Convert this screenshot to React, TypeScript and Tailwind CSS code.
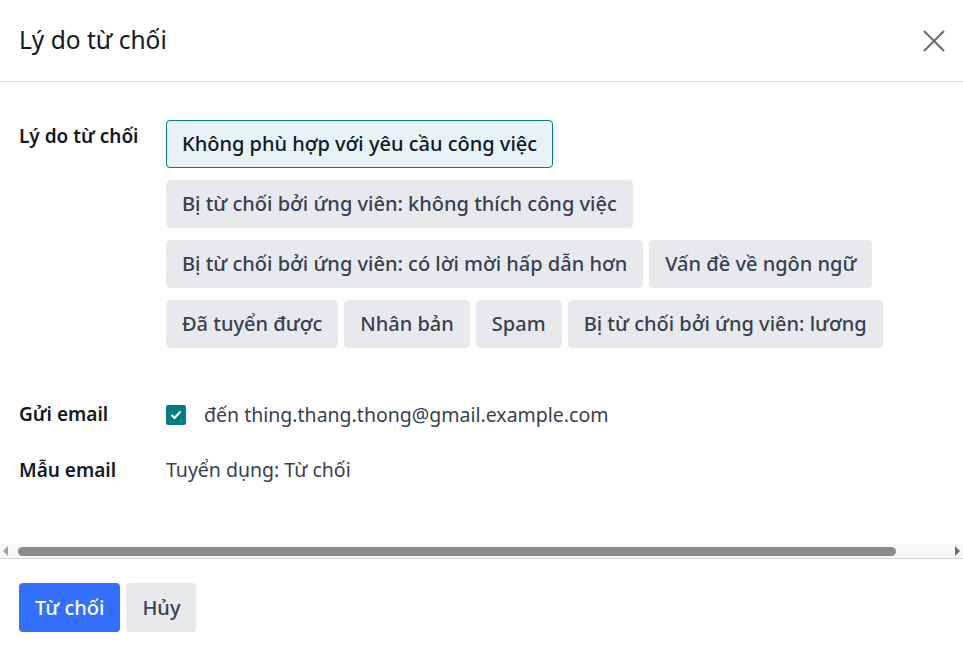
import React from 'react';

const reasons = [
  'Không phù hợp với yêu cầu công việc',
  'Bị từ chối bởi ứng viên: không thích công việc',
  'Bị từ chối bởi ứng viên: có lời mời hấp dẫn hơn',
  'Vấn đề về ngôn ngữ',
  'Đã tuyển được',
  'Nhân bản',
  'Spam',
  'Bị từ chối bởi ứng viên: lương',
];

function ReasonPill({ label, active }: { label: string; active?: boolean }) {
  return (
    <button
      className={`h-[48px] px-[15px] rounded-[4px] border text-[20px] font-medium leading-none whitespace-nowrap
        ${active ? 'bg-[#e6f2f3] border-[#017e84] text-[#111827]' : 'bg-[#e7e9ed] border-[#e7e9ed] text-[#374151]'}`}
    >
      {label}
    </button>
  );
}

export default function App() {
  return (
    <div
      className="w-[963px] h-[656px] bg-white flex flex-col overflow-hidden text-[#111827]"
      style={{ fontFamily: '"Noto Sans", "Open Sans", sans-serif' }}
    >
      <header className="h-[82px] flex items-center justify-between pl-[19px] pr-[16px] border-b border-[#d8dadd] shrink-0">
        <h1 className="text-[24.5px] font-normal">Lý do từ chối</h1>
        <button className="text-[#6b6b6b]">
          <svg width="26" height="26" viewBox="0 0 26 26" fill="none" stroke="currentColor" strokeWidth="2">
            <path d="M3 3L23 23M23 3L3 23" />
          </svg>
        </button>
      </header>

      <main className="flex-1 flex flex-col pt-[38px]">
        <div className="flex px-[19px]">
          <div className="w-[147px] shrink-0 text-[19px] font-semibold pt-[2px]">Lý do từ chối</div>
          <div className="flex flex-wrap gap-x-[6px] gap-y-[12px] w-[740px]">
            {reasons.map((r, i) => (
              <ReasonPill key={r} label={r} active={i === 0} />
            ))}
          </div>
        </div>

        <div className="flex items-center px-[19px] mt-[52px]">
          <div className="w-[147px] shrink-0 text-[19px] font-semibold">Gửi email</div>
          <span className="w-[20px] h-[20px] rounded-[2px] bg-[#017e84] flex items-center justify-center">
            <svg width="12" height="10" viewBox="0 0 12 10" fill="none" stroke="white" strokeWidth="2.2">
              <path d="M1.5 5L4.5 8L10.5 1.5" />
            </svg>
          </span>
          <span className="ml-[18px] text-[19.5px] text-[#374151]">đến thing.thang.thong@gmail.example.com</span>
        </div>

        <div className="flex items-center px-[19px] mt-[26px]">
          <div className="w-[147px] shrink-0 text-[19px] font-semibold">Mẫu email</div>
          <span className="text-[19.5px] text-[#374151]">Tuyển dụng: Từ chối</span>
        </div>

        <div className="mt-auto h-[14px] bg-[#f8f8f8] flex items-center">
          <span className="w-0 h-0 ml-[3px] border-y-[5px] border-y-transparent border-r-[5px] border-r-[#a3a3a3]" />
          <div className="ml-[10px] w-[878px] h-[9px] rounded-full bg-[#8b8b8b]" />
          <span className="ml-auto mr-[3px] w-0 h-0 border-y-[5px] border-y-transparent border-l-[5px] border-l-[#6b6b6b]" />
        </div>
      </main>

      <footer className="h-[98px] shrink-0 border-t border-[#d8dadd] flex items-start gap-[6px] pl-[19px] pt-[24px]">
        <button className="h-[49px] px-[16px] rounded-[4px] bg-[#3370ff] text-white text-[20px] font-medium">Từ chối</button>
        <button className="h-[49px] px-[16px] rounded-[4px] bg-[#e7e9ed] text-[#374151] text-[20px] font-medium">Hủy</button>
      </footer>
    </div>
  );
}
